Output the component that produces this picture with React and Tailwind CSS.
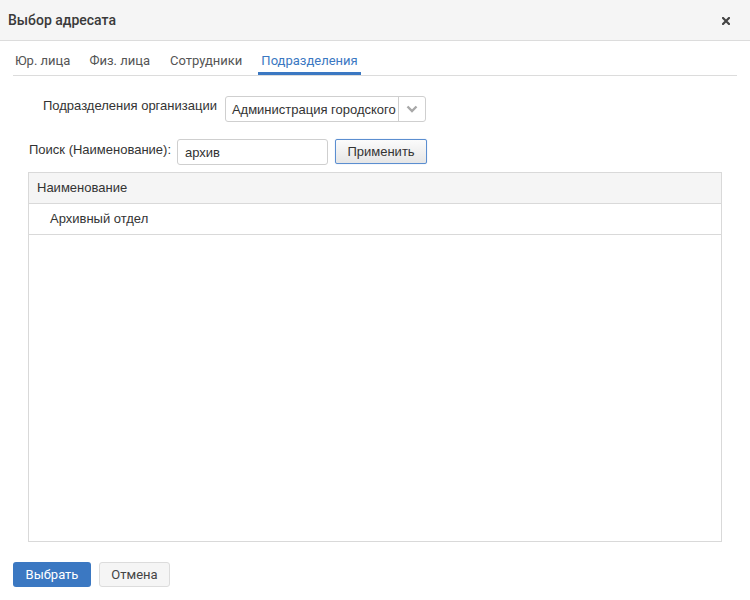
import React from "react";

const roboto = { fontFamily: "Roboto, 'Liberation Sans', sans-serif" };

export default function App() {
  return (
    <div className="w-[750px] h-[600px] bg-white flex flex-col text-[#333] font-['Liberation_Sans',Arial,sans-serif]">
      {/* Header */}
      <div className="h-[41px] shrink-0 bg-[#f5f5f5] border-b border-[#dcdcdc] flex items-center justify-between pl-[8px] pr-[20px]">
        <span className="text-[14px] font-medium text-[#3a3a3a] font-['Roboto',sans-serif]">Выбор адресата</span>
        <svg width="8" height="8" viewBox="0 0 8 8" className="mt-[1px]">
          <path d="M1 1 L7 7 M7 1 L1 7" stroke="#444" strokeWidth="2.2" strokeLinecap="square" />
        </svg>
      </div>

      {/* Tabs */}
      <div className="mt-[8px] mx-[13px] flex gap-[13px] border-b border-[#dcdcdc] font-['Roboto',sans-serif] text-[13px] leading-[18px]">
        <div className="px-[2px] pt-[3px] pb-[2px] border-b-[3px] border-transparent text-[#555]">Юр. лица</div>
        <div className="px-[4px] pt-[3px] pb-[2px] border-b-[3px] border-transparent text-[#555]">Физ. лица</div>
        <div className="px-[3px] pt-[3px] pb-[2px] border-b-[3px] border-transparent text-[#555]">Сотрудники</div>
        <div className="px-[3px] pt-[3px] pb-[2px] border-b-[3px] border-[#3b78c2] text-[#3b78c2]">Подразделения</div>
      </div>

      {/* Row 1 */}
      <div className="mt-[20px] ml-[43px] flex items-start gap-[8px] text-[13px]">
        <span className="pt-[2px] leading-[16px] text-[#333]">Подразделения организации</span>
        <div className="w-[201px] h-[26px] border border-[#cfcfcf] rounded-[3px] flex items-center bg-white">
          <span className="flex-1 pl-[6px] pt-[1px] whitespace-nowrap overflow-hidden text-[#333]">Администрация городского</span>
          <div className="w-[27px] h-full border-l border-[#cfcfcf] flex items-center justify-center">
            <svg width="12" height="8" viewBox="0 0 12 8">
              <path d="M1.5 1.5 L6 6 L10.5 1.5" stroke="#a8a8a8" strokeWidth="2.4" fill="none" />
            </svg>
          </div>
        </div>
      </div>

      {/* Row 2 */}
      <div className="mt-[17px] ml-[29px] flex items-start text-[13px]">
        <span className="pt-[3px] leading-[16px] text-[#333]">Поиск (Наименование):</span>
        <div className="ml-[6px] w-[151px] h-[26px] border border-[#cfcfcf] rounded-[3px] flex items-center pl-[7px] pt-[1px] text-[#333]">архив</div>
        <div className="ml-[7px] w-[92px] h-[25px] border border-[#5b8ed0] rounded-[2px] bg-gradient-to-b from-[#fbfbfb] to-[#e6e6e6] flex items-center justify-center text-[#333] shadow-[0_0_1px_#9bbbe6]">Применить</div>
      </div>

      {/* Table */}
      <div className="mt-[7px] ml-[28px] w-[694px] h-[370px] border border-[#d9d9d9] text-[13px] flex flex-col">
        <div className="h-[31px] bg-[#f5f5f5] border-b border-[#d9d9d9] flex items-center pl-[8px] text-[#333]">Наименование</div>
        <div className="h-[31px] border-b border-[#d9d9d9] flex items-center pl-[21px] text-[#333]">Архивный отдел</div>
      </div>

      {/* Footer */}
      <div className="mt-[20px] ml-[13px] flex gap-[8px] text-[13px]" style={roboto}>
        <div className="w-[78px] h-[25px] rounded-[3px] bg-[#3b78c2] text-white flex items-center justify-center">Выбрать</div>
        <div className="w-[71px] h-[25px] rounded-[3px] bg-[#f5f5f5] border border-[#dcdcdc] text-[#444] flex items-center justify-center">Отмена</div>
      </div>
    </div>
  );
}
